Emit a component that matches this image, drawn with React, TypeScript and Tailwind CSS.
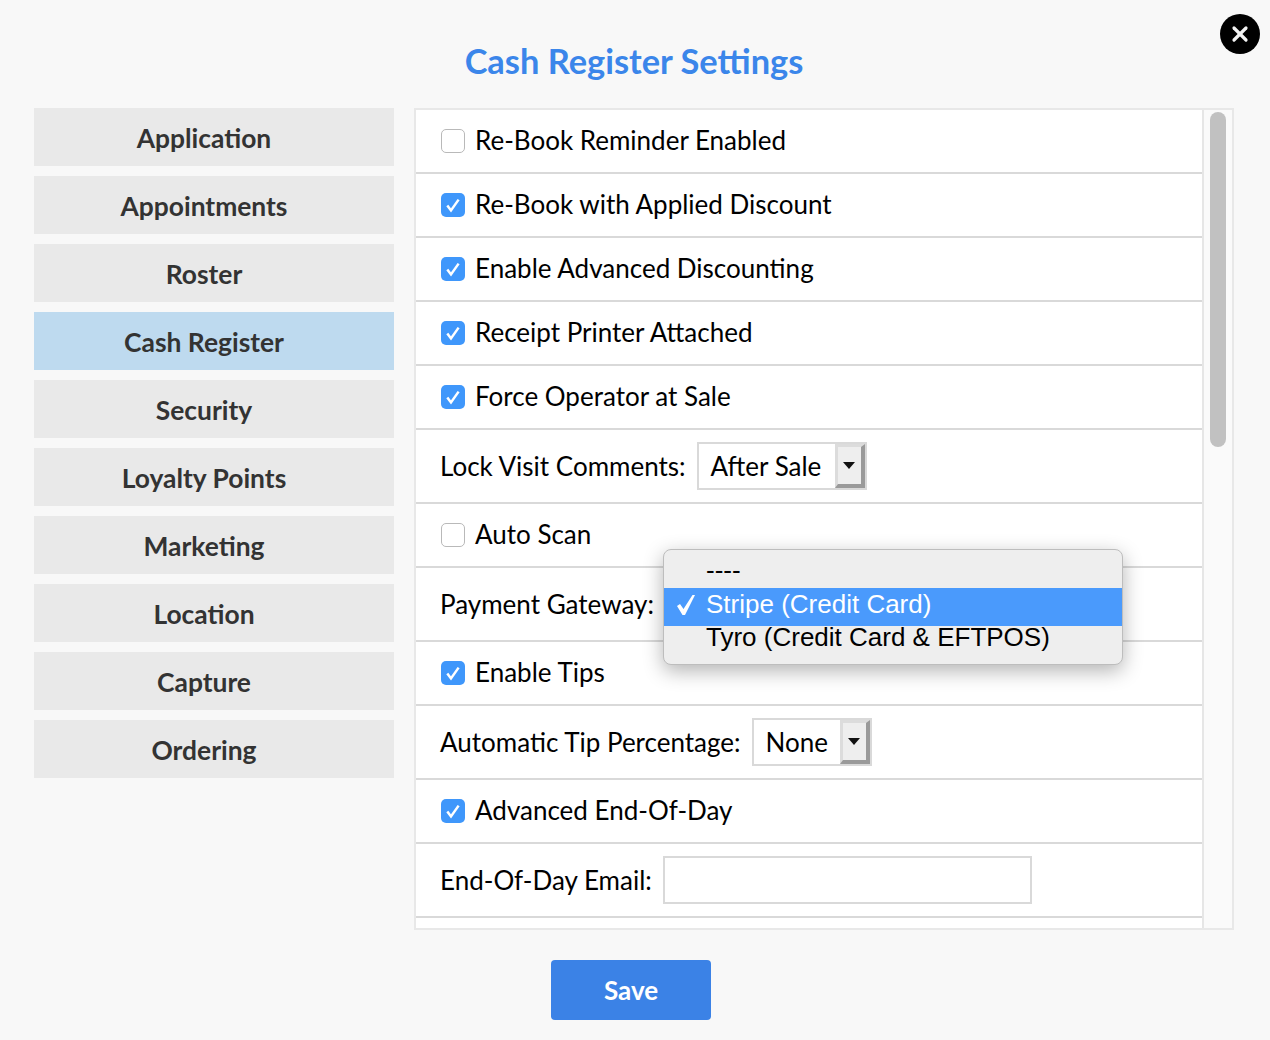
import React from 'react';
import { X } from 'lucide-react';

const tabs = ['Application', 'Appointments', 'Roster', 'Cash Register', 'Security', 'Loyalty Points', 'Marketing', 'Location', 'Capture', 'Ordering'];

const CheckRow = ({ label, checked }: { label: string; checked?: boolean }) => (
  <div className="flex h-[64px] items-center border-b-2 border-[#d9d9d9] pl-[25px]">
    {checked ? (
      <span className="mr-[10px] h-6 w-6 rounded-[5px] bg-[#3f97fb]">
        <svg width="24" height="24" viewBox="0 0 24 24" fill="none">
          <path d="M6.3 12.4 L10 17.4 L17.6 6.6" stroke="white" strokeWidth="2.5" />
        </svg>
      </span>
    ) : (
      <span className="mr-[10px] h-6 w-6 rounded-[5px] border border-[#b9b9b9] bg-white" />
    )}
    <span className="-mt-[2px]">{label}</span>
  </div>
);

const SelectRow = ({ label, value, width }: { label: string; value: string; width: string }) => (
  <div className="flex h-[74px] items-center border-b-2 border-[#d9d9d9] pl-[24px]">
    <span className="mr-[11px]">{label}</span>
    <div className={`flex h-[48px] items-stretch border-2 border-[#d9d9d9] bg-white ${width}`}>
      <span className="flex flex-1 items-center pl-[12px]">{value}</span>
      <span className="flex w-[30px] items-center justify-center border-t-[3px] border-r-4 border-b-4 border-l-[3px] border-t-[#dcdcdc] border-r-[#9a9a9a] border-b-[#9a9a9a] border-l-[#dcdcdc] bg-[#eeeeee]">
        <span className="h-0 w-0 border-x-[6px] border-t-[7px] border-x-transparent border-t-[#111111]" />
      </span>
    </div>
  </div>
);

const App: React.FC = () => {
  return (
    <div className="relative h-[1040px] w-[1270px] overflow-hidden bg-[#f8f8f8] font-['Lato','Noto_Sans',sans-serif] text-black">
      <button className="absolute left-[1220px] top-[14px] flex h-10 w-10 items-center justify-center rounded-full bg-black">
        <X size={24} strokeWidth={3.2} color="#f4f4f4" />
      </button>

      <h1 className="flex h-[108px] items-start justify-center pt-[37px] pr-[2px] text-[34.4px] leading-[48px] font-bold text-[#3b86ea]">
        Cash Register Settings
      </h1>

      <div className="flex items-start pl-[34px]">
        <div className="flex w-[360px] flex-col gap-[10px]">
          {tabs.map((tab) => (
            <div
              key={tab}
              className={`flex h-[58px] items-center justify-center pt-[4px] pr-5 text-[26.4px] font-bold text-[#333333] ${tab === 'Cash Register' ? 'bg-[#bedaef]' : 'bg-[#e9e9e9]'}`}
            >
              {tab}
            </div>
          ))}
        </div>

        <div className="relative ml-5 flex h-[822px] w-[820px] border-2 border-[#e8e8e8] text-[26px]">
          <div className="w-[788px] overflow-hidden border-r-2 border-[#e6e6e6] bg-white">
            <CheckRow label="Re-Book Reminder Enabled" />
            <CheckRow label="Re-Book with Applied Discount" checked />
            <CheckRow label="Enable Advanced Discounting" checked />
            <CheckRow label="Receipt Printer Attached" checked />
            <CheckRow label="Force Operator at Sale" checked />
            <SelectRow label="Lock Visit Comments:" value="After Sale" width="w-[170px]" />
            <CheckRow label="Auto Scan" />
            <div className="flex h-[74px] items-center border-b-2 border-[#d9d9d9] pl-[24px]">Payment Gateway:</div>
            <CheckRow label="Enable Tips" checked />
            <SelectRow label="Automatic Tip Percentage:" value="None" width="w-[120px]" />
            <CheckRow label="Advanced End-Of-Day" checked />
            <div className="flex h-[74px] items-center border-b-2 border-[#d9d9d9] pl-[24px]">
              <span className="mr-[11px]">End-Of-Day Email:</span>
              <span className="h-[48px] w-[369px] border-2 border-[#d9d9d9] bg-white" />
            </div>
          </div>
          <div className="flex-1 bg-[#fafafa] pl-[6px] pt-[2px]">
            <div className="h-[335px] w-4 rounded-lg bg-[#c1c1c1]" />
          </div>

          <div className="absolute left-[247px] top-[439px] w-[460px] rounded-[8px] border border-[#bdbdbd] bg-[#eeeeee] py-[4px] font-['Liberation_Sans',Arial,sans-serif] text-[26px] shadow-[0_6px_20px_rgba(0,0,0,0.3)]">
            <div className="h-[34px] pl-[42px] leading-[32px]">----</div>
            <div className="relative h-[38px] bg-[#4a9afc] pl-[42px] leading-[32px] text-white">
              <svg className="absolute left-[13px] top-[7px]" width="18" height="20" viewBox="0 0 18 20" fill="white">
                <path d="M0 11 L3 9 L6.5 14 L15.5 0 L18 0 L8 20 L5.5 20 Z" />
              </svg>
              Stripe (Credit Card)
            </div>
            <div className="h-[34px] pl-[42px] leading-[22px]">Tyro (Credit Card &amp; EFTPOS)</div>
          </div>
        </div>
      </div>

      <div className="mt-[30px] flex justify-center pr-[8px]">
        <button className="h-[60px] w-[160px] rounded-[4px] bg-[#3b82e6] text-[26px] font-bold text-white">Save</button>
      </div>
    </div>
  );
};

export default App;
